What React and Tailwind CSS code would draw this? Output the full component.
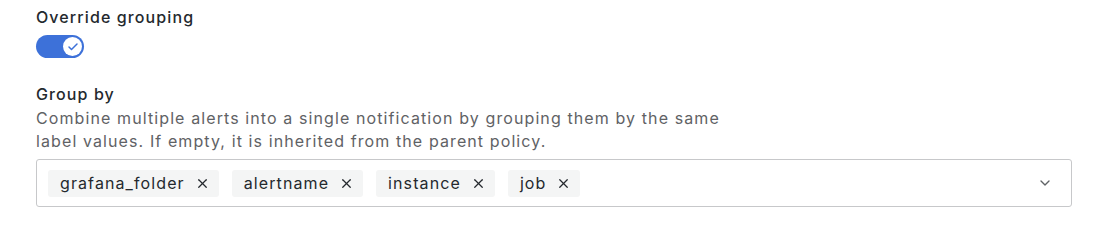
import { Check, X, ChevronDown } from "lucide-react";

const labels = ["grafana_folder", "alertname", "instance", "job"];

function Chip({ name }) {
    return (
        <div className="flex items-center h-[27px] pl-[12px] pr-[9px] rounded-[3px] bg-[#f4f5f5] text-[#24292e] text-[16px]">
            <span className="leading-none">{name}</span>
            <X className="ml-[10px] w-[15px] h-[15px] text-[#24292e]" strokeWidth={2} />
        </div>
    );
}

export default function App() {
    return (
        <div className="min-h-screen bg-white font-['Inter',sans-serif] tracking-[1.1px] pl-[36px] pt-[6px]">
            <div className="text-[16px] font-medium leading-[22px] text-[#24292e]">Override grouping</div>

            <div className="mt-[7px] w-[48px] h-[23px] rounded-full bg-[#3d71d9] flex items-center justify-end pr-[2px]">
                <div className="w-[19px] h-[19px] rounded-full bg-white flex items-center justify-center">
                    <Check className="w-[12px] h-[12px] text-[#3d71d9]" strokeWidth={3} />
                </div>
            </div>

            <div className="mt-[25px] text-[16px] font-medium leading-[22px] text-[#24292e]">Group by</div>
            <p className="mt-[2px] w-[700px] text-[16px] leading-[23px] text-[#5f6265]">
                Combine multiple alerts into a single notification by grouping them by the same
                label values. If empty, it is inherited from the parent policy.
            </p>

            <div className="mt-[6px] w-[1036px] h-[48px] border border-[#c7c8ca] rounded-[3px] flex items-center pl-[11px] pr-[18px]">
                <div className="flex-1 flex items-center gap-[13px]">
                    {labels.map((l) => (
                        <Chip key={l} name={l} />
                    ))}
                </div>
                <ChevronDown className="w-[16px] h-[16px] text-[#5f6265]" strokeWidth={2} />
            </div>
        </div>
    );
}
